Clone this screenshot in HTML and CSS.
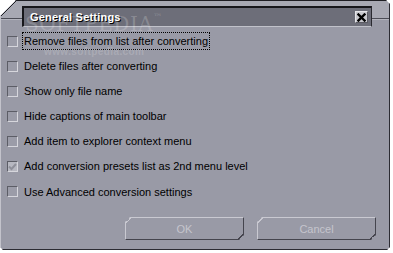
FILE: index.html
```html
<!DOCTYPE html>
<html lang="en">
<head>
    <meta charset="UTF-8">
    <title>General Settings</title>
    <link rel="stylesheet" href="styles.css">
</head>
<body>
    <div class="window">
        <div class="watermark">SOFTPEDIA<span class="tm">&trade;</span></div>
        <div class="watermark-url">www.softpedia.com</div>

        <div class="titlebar">
            <span class="title">General Settings</span>
            <span class="close">
                <svg width="9" height="9" viewBox="0 0 9 9">
                    <path d="M1.5 1.5 L7.5 7.5 M7.5 1.5 L1.5 7.5" stroke="#000" stroke-width="2.4" stroke-linecap="square"/>
                </svg>
            </span>
        </div>

        <ul class="options">
            <li class="option"><span class="check"></span><span class="label focused">Remove files from list after converting</span></li>
            <li class="option"><span class="check"></span><span class="label">Delete files after converting</span></li>
            <li class="option"><span class="check"></span><span class="label">Show only file name</span></li>
            <li class="option"><span class="check"></span><span class="label">Hide captions of main toolbar</span></li>
            <li class="option"><span class="check"></span><span class="label">Add item to explorer context menu</span></li>
            <li class="option">
                <span class="check checked">
                    <svg width="9" height="9" viewBox="0 0 9 9">
                        <path d="M1 4.5 L3.5 7 L8 2" fill="none" stroke="#8f909a" stroke-width="2"/>
                    </svg>
                </span>
                <span class="label">Add conversion presets list as 2nd menu level</span>
            </li>
            <li class="option"><span class="check"></span><span class="label">Use Advanced conversion settings</span></li>
        </ul>

        <div class="actions">
            <span class="btn">OK</span>
            <span class="btn">Cancel</span>
        </div>
    </div>
</body>
</html>
```

FILE: styles.css
```css
body {
    margin: 0;
    background: #ffffff;
    font-family: "Liberation Sans", Arial, sans-serif;
}

.window {
    position: relative;
    width: 390px;
    height: 250px;
    box-sizing: border-box;
    display: flex;
    flex-direction: column;
    clip-path: polygon(16px 0, calc(100% - 4px) 0, 100% 4px, 100% calc(100% - 3px), calc(100% - 3px) 100%, 3px 100%, 0 calc(100% - 3px), 0 16px);
    background:
        linear-gradient(to bottom right, transparent 0 50%, #1e1e23 50% calc(50% + 1.2px), transparent calc(50% + 1.2px)) 0 0 / 16px 16px no-repeat,
        linear-gradient(to bottom, #a8a9b3 0 18px, #4c4d56 18px 19px, #b3b4bd 19px 20px, #999aa6 20px);
    box-shadow:
        inset 0 1px 0 #1e1e23,
        inset -1px 0 0 #2c2c33,
        inset 0 -1px 0 #2c2c33,
        inset 1px 0 0 #c3c3cb;
}

/* faint softpedia stamp over the dialog */
.watermark {
    position: absolute;
    z-index: 2;
    left: 25px;
    top: 12px;
    font-family: "DejaVu Serif", serif;
    font-size: 20px;
    letter-spacing: 0.5px;
    color: rgba(255, 255, 255, 0.2);
    pointer-events: none;
}

.watermark .tm {
    font-size: 9px;
    vertical-align: top;
}

.watermark-url {
    position: absolute;
    z-index: 2;
    left: 44px;
    top: 46px;
    font-size: 10px;
    font-weight: bold;
    letter-spacing: 0.4px;
    color: rgba(255, 255, 255, 0.18);
    pointer-events: none;
}

.titlebar {
    display: flex;
    align-items: center;
    justify-content: space-between;
    height: 21px;
    box-sizing: border-box;
    margin: 6px 18px 0 22px;
    padding: 0 3px 0 6px;
    background: #6d6e79;
    border-top: 2px solid #17171b;
    border-left: 2px solid #17171b;
    border-right: 1px solid #2a2a30;
    border-bottom: 1px solid #c1c2ca;
}

.title {
    color: #ffffff;
    font-size: 11px;
    font-weight: bold;
    letter-spacing: 0.2px;
    text-shadow: 1px 1px 0 #000000;
}

.close {
    display: flex;
    align-items: center;
    justify-content: center;
    width: 13px;
    height: 12px;
    box-sizing: border-box;
    background: #c9c9cf;
    border: 1px solid;
    border-color: #e6e6ea #5b5b63 #5b5b63 #e6e6ea;
}

.options {
    list-style: none;
    margin: 5px 0 0;
    padding: 0 0 0 7px;
    display: flex;
    flex-direction: column;
    gap: 7.1px;
}

.option {
    display: flex;
    align-items: center;
    height: 18px;
}

.check {
    display: flex;
    align-items: center;
    justify-content: center;
    width: 11px;
    height: 11px;
    box-sizing: border-box;
    margin-right: 4px;
    border: 1px solid;
    border-color: #5c5d66 #d6d6dc #d6d6dc #5c5d66;
    background: #9b9ca8;
}

.check.checked {
    background: #b7b8c1;
}

.label {
    font-size: 11px;
    line-height: 16px;
    color: #000000;
    padding: 0 1px;
    border: 1px dotted transparent;
}

.label.focused {
    border-color: #000000;
}

.actions {
    margin-top: auto;
    display: flex;
    justify-content: flex-end;
    gap: 13px;
    padding: 0 14px 10px 0;
}

.btn {
    display: flex;
    align-items: center;
    justify-content: center;
    width: 119px;
    height: 23px;
    box-sizing: border-box;
    font-size: 11px;
    color: #c5c5cd;
    border: 1px solid;
    border-color: #c9c9d1 #45454e #45454e #c9c9d1;
    clip-path: polygon(5px 0, 100% 0, 100% calc(100% - 5px), calc(100% - 5px) 100%, 0 100%, 0 5px);
    background:
        linear-gradient(to bottom right, transparent 0 50%, #c9c9d1 50% calc(50% + 1.2px), transparent calc(50% + 1.2px)) -1px -1px / 6px 6px no-repeat,
        linear-gradient(to top left, transparent 0 50%, #45454e 50% calc(50% + 1.2px), transparent calc(50% + 1.2px)) calc(100% + 1px) calc(100% + 1px) / 6px 6px no-repeat,
        #999aa6;
}
```
